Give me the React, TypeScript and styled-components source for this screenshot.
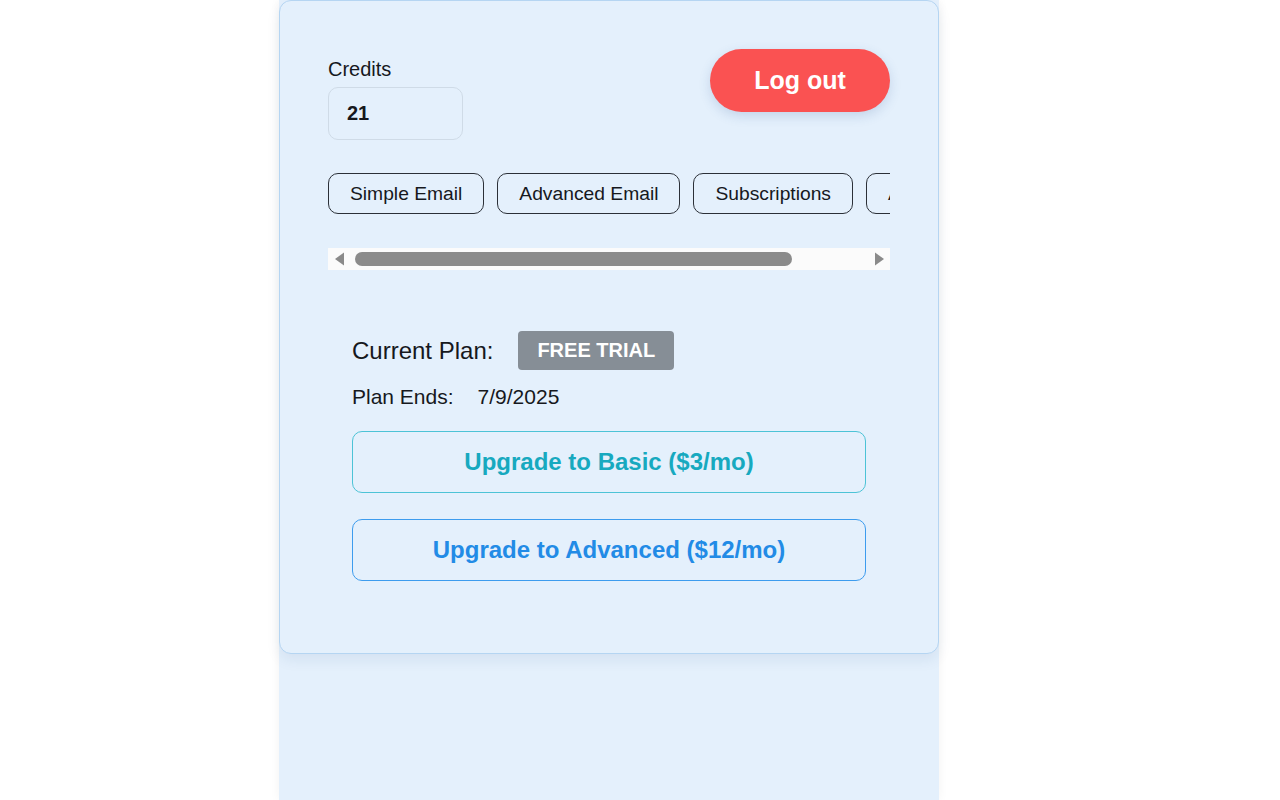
import React from "react";
import styled, { createGlobalStyle } from "styled-components";

const GlobalStyle = createGlobalStyle`
  html, body { margin: 0; padding: 0; background: #ffffff; }
  body { font-family: "Liberation Sans", Arial, sans-serif; color: #16181d; }
  * { box-sizing: border-box; }
`;

const Page = styled.div`
  display: flex;
  min-height: 100vh;
`;

const Column = styled.main`
  width: 660px;
  margin-left: 279px;
  min-height: 100vh;
  background: #e4f0fc;
  box-shadow: 0 0 10px rgba(0, 0, 0, 0.05);
`;

const Card = styled.section`
  background: #e4f0fc;
  border: 1px solid #b5d5f2;
  border-radius: 12px;
  box-shadow: 0 6px 14px rgba(30, 60, 110, 0.08);
  padding: 48px 48px 72px;
`;

const TopRow = styled.div`
  display: flex;
  justify-content: space-between;
  align-items: flex-start;
`;

const CreditsBlock = styled.div`
  display: flex;
  flex-direction: column;
  padding-top: 9px;
  gap: 6px;
`;

const Label = styled.label`
  font-size: 20px;
  line-height: 23px;
`;

const CreditsBox = styled.div`
  width: 135px;
  height: 53px;
  border: 1px solid #cfdbe7;
  border-radius: 10px;
  display: flex;
  align-items: center;
  padding-left: 18px;
  font-size: 20px;
  font-weight: 700;
`;

const LogoutButton = styled.button`
  width: 180px;
  height: 63px;
  border: none;
  border-radius: 32px;
  background: #fa5252;
  color: #ffffff;
  font-family: inherit;
  font-size: 25px;
  font-weight: 700;
  box-shadow: 0 4px 12px rgba(50, 90, 150, 0.18);
  cursor: pointer;
`;

const TabScroller = styled.div`
  margin-top: 33px;
  display: flex;
  gap: 13px;
  overflow-x: auto;
  scrollbar-width: none;
`;

const Tab = styled.button`
  flex: none;
  height: 41px;
  padding: 0 21px;
  border: 1px solid #2b3038;
  border-radius: 10px;
  background: transparent;
  font-family: inherit;
  font-size: 19.25px;
  color: #16181d;
  cursor: pointer;
`;

const ScrollTrack = styled.div`
  margin-top: 34px;
  height: 22px;
  background: #fbfbfb;
  display: flex;
  align-items: center;
`;

const ArrowBox = styled.div`
  flex: none;
  width: 22px;
  height: 22px;
  display: flex;
  align-items: center;
  justify-content: center;
`;

const ThumbLane = styled.div`
  flex: 1;
  display: flex;
  align-items: center;
  padding-left: 5px;
`;

const Thumb = styled.div`
  width: 437px;
  height: 14px;
  border-radius: 7px;
  background: #8b8b8b;
`;

const PlanSection = styled.div`
  margin-top: 37px;
  padding: 24px 24px 0;
  display: flex;
  flex-direction: column;
`;

const PlanRow = styled.div`
  display: flex;
  align-items: center;
  gap: 25px;
`;

const PlanLabel = styled.span`
  font-size: 24px;
`;

const Badge = styled.span`
  background: #868e96;
  color: #ffffff;
  font-weight: 700;
  font-size: 20px;
  border-radius: 4px;
  height: 39px;
  padding: 0 19px;
  display: inline-flex;
  align-items: center;
`;

const EndsRow = styled.div`
  display: flex;
  gap: 24px;
  font-size: 21px;
  line-height: 24px;
  margin-top: 15px;
`;

const UpgradeButton = styled.button<{ $tone: "teal" | "blue" }>`
  margin-top: ${(p) => (p.$tone === "teal" ? "22px" : "26px")};
  width: 100%;
  height: 62px;
  border: 1px solid ${(p) => (p.$tone === "teal" ? "#4cc3d6" : "#3d9cee")};
  border-radius: 10px;
  background: transparent;
  color: ${(p) => (p.$tone === "teal" ? "#17a9bf" : "#228be6")};
  font-family: inherit;
  font-size: 24px;
  font-weight: 700;
  cursor: pointer;
`;

const tabs = ["Simple Email", "Advanced Email", "Subscriptions", "Analytics"];

export default function App() {
  return (
    <Page>
      <GlobalStyle />
      <Column>
        <Card>
          <TopRow>
            <CreditsBlock>
              <Label>Credits</Label>
              <CreditsBox>21</CreditsBox>
            </CreditsBlock>
            <LogoutButton>Log out</LogoutButton>
          </TopRow>
          <TabScroller>
            {tabs.map((t) => (
              <Tab key={t}>{t}</Tab>
            ))}
          </TabScroller>
          <ScrollTrack aria-hidden="true">
            <ArrowBox>
              <svg width="9" height="14" viewBox="0 0 9 14">
                <path d="M0 7 L9 0.5 L9 13.5 Z" fill="#8a8a8a" />
              </svg>
            </ArrowBox>
            <ThumbLane>
              <Thumb />
            </ThumbLane>
            <ArrowBox>
              <svg width="9" height="14" viewBox="0 0 9 14">
                <path d="M9 7 L0 0.5 L0 13.5 Z" fill="#8a8a8a" />
              </svg>
            </ArrowBox>
          </ScrollTrack>
          <PlanSection>
            <PlanRow>
              <PlanLabel>Current Plan:</PlanLabel>
              <Badge>FREE TRIAL</Badge>
            </PlanRow>
            <EndsRow>
              <span>Plan Ends:</span>
              <span>7/9/2025</span>
            </EndsRow>
            <UpgradeButton $tone="teal">Upgrade to Basic ($3/mo)</UpgradeButton>
            <UpgradeButton $tone="blue">Upgrade to Advanced ($12/mo)</UpgradeButton>
          </PlanSection>
        </Card>
      </Column>
    </Page>
  );
}
